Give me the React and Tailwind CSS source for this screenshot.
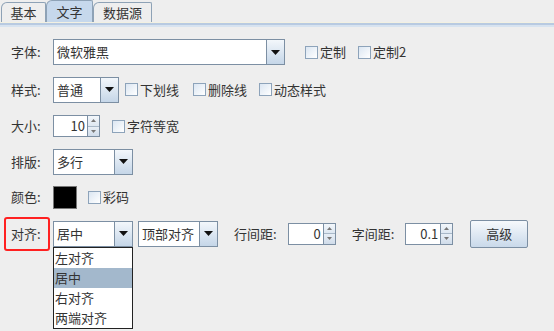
const FONT = "font-['Noto_Sans_CJK_SC','Noto_Sans',sans-serif]";

function Arrow() {
  return (
    <svg width="9" height="5" viewBox="0 0 9 5">
      <path d="M0 0 H9 L4.5 5 Z" fill="#111" />
    </svg>
  );
}

function Combo({ value, width, open, items, selected }) {
  return (
    <div className="relative flex h-[26px] shrink-0" style={{ width }}>
      <div className="flex flex-1 items-center border border-[#7c8fa3] bg-white pl-[3px] text-[13px] text-[#333]">
        {value}
      </div>
      <div className="-ml-px flex w-[19px] items-center justify-center border border-[#7c8fa3] bg-gradient-to-b from-[#f3f7fb] to-[#c5d6e8]">
        <Arrow />
      </div>
      {open && (
        <div className="absolute left-0 top-full w-[80px] border border-[#222] bg-white">
          {items.map((it) => (
            <div
              key={it}
              className={`flex h-[20px] items-center pl-[1px] text-[13px] text-[#333] ${
                it === selected ? 'bg-[#a3b8cc]' : ''
              }`}
            >
              {it}
            </div>
          ))}
        </div>
      )}
    </div>
  );
}

function Spinner({ value, width }) {
  return (
    <div className="flex h-[22px] shrink-0" style={{ width }}>
      <div className="flex flex-1 items-center justify-end border border-[#7c8fa3] bg-white pr-[2px] text-[13px] text-[#333]">
        {value}
      </div>
      <div className="-ml-px flex w-[13px] flex-col border border-[#7c8fa3]">
        <div className="flex flex-1 items-center justify-center border-b border-[#a8b8c8] bg-gradient-to-b from-[#f3f7fb] to-[#dde7f1]">
          <svg width="5" height="3" viewBox="0 0 5 3"><path d="M0 3 L2.5 0 L5 3 Z" fill="#777" /></svg>
        </div>
        <div className="flex flex-1 items-center justify-center bg-gradient-to-b from-[#e8eff6] to-[#d0dcea]">
          <svg width="5" height="3" viewBox="0 0 5 3"><path d="M0 0 H5 L2.5 3 Z" fill="#777" /></svg>
        </div>
      </div>
    </div>
  );
}

function Check({ label, className = '' }) {
  return (
    <div className={`flex items-center gap-[2px] text-[13px] text-[#333] ${className}`}>
      <div className="h-[13px] w-[13px] border border-[#8da3ba] bg-gradient-to-br from-[#dbe6f2] to-white" />
      <span>{label}</span>
    </div>
  );
}

function Label({ text, boxed }) {
  if (boxed) {
    return (
      <div className="flex h-[34px] w-[46px] shrink-0 items-center rounded-[3px] border-2 border-[#ff2020] pl-[5px] text-[13px] text-[#333]">
        {text}
      </div>
    );
  }
  return (
    <div className="flex w-[46px] shrink-0 items-center pl-[7px] text-[13px] text-[#333]">{text}</div>
  );
}

function Tab({ text, active, className = '' }) {
  return (
    <div
      className={`flex items-center justify-center rounded-tl-[6px] rounded-tr-[2px] border border-b-0 border-[#8ea2b6] text-[13px] text-[#333] ${
        active ? 'h-[22px] bg-[#c6d8ec]' : 'h-[20px] bg-[#eeeeee]'
      } ${className}`}
    >
      {text}
    </div>
  );
}

export default function App() {
  return (
    <div className={`h-[331px] w-[554px] overflow-hidden bg-[#eeeeee] ${FONT}`}>
      {/* tabs */}
      <div className="flex h-[22px] items-end pl-[1px]">
        <Tab text="基本" className="w-[45px]" />
        <Tab text="文字" active className="w-[47px]" />
        <Tab text="数据源" className="w-[59px]" />
      </div>
      <div className="h-[5px] border-t border-t-[#f3f1e2] border-b-2 border-b-[#d7e3f0] bg-[#b8cae1]" />

      <div className="flex flex-col pl-[4px] pt-[6px]">
        {/* 字体 */}
        <div className="flex h-[38px] items-center">
          <Label text="字体:" />
          <div className="ml-[3px]">
            <Combo value="微软雅黑" width={232} />
          </div>
          <Check label="定制" className="ml-[20px]" />
          <Check label="定制2" className="ml-[12px]" />
        </div>

        {/* 样式 */}
        <div className="flex h-[37px] items-center">
          <Label text="样式:" />
          <div className="ml-[3px]">
            <Combo value="普通" width={66} />
          </div>
          <Check label="下划线" className="ml-[6px]" />
          <Check label="删除线" className="ml-[14px]" />
          <Check label="动态样式" className="ml-[12px]" />
        </div>

        {/* 大小 */}
        <div className="flex h-[36px] items-center">
          <Label text="大小:" />
          <div className="ml-[3px]">
            <Spinner value="10" width={47} />
          </div>
          <Check label="字符等宽" className="ml-[12px]" />
        </div>

        {/* 排版 */}
        <div className="flex h-[35px] items-center">
          <Label text="排版:" />
          <div className="ml-[3px]">
            <Combo value="多行" width={80} />
          </div>
        </div>

        {/* 颜色 */}
        <div className="flex h-[36px] items-center">
          <Label text="颜色:" />
          <div className="ml-[3px] h-[23px] w-[24px] border border-[#777] bg-black" />
          <Check label="彩码" className="ml-[11px]" />
        </div>

        {/* 对齐 */}
        <div className="flex h-[37px] items-center">
          <Label text="对齐:" boxed />
          <div className="ml-[3px]">
            <Combo
              value="居中"
              width={80}
              open
              items={['左对齐', '居中', '右对齐', '两端对齐']}
              selected="居中"
            />
          </div>
          <div className="ml-[5px]">
            <Combo value="顶部对齐" width={80} />
          </div>
          <div className="ml-[16px] text-[13px] text-[#333]">行间距:</div>
          <div className="ml-[11px]">
            <Spinner value="0" width={48} />
          </div>
          <div className="ml-[16px] text-[13px] text-[#333]">字间距:</div>
          <div className="ml-[11px]">
            <Spinner value="0.1" width={48} />
          </div>
          <button className="ml-[17px] h-[28px] w-[58px] rounded-[2px] border border-[#7c8fa3] bg-gradient-to-b from-[#f6f9fc] to-[#c9d9ea] text-[13px] text-[#333]">
            高级
          </button>
        </div>
      </div>
    </div>
  );
}
